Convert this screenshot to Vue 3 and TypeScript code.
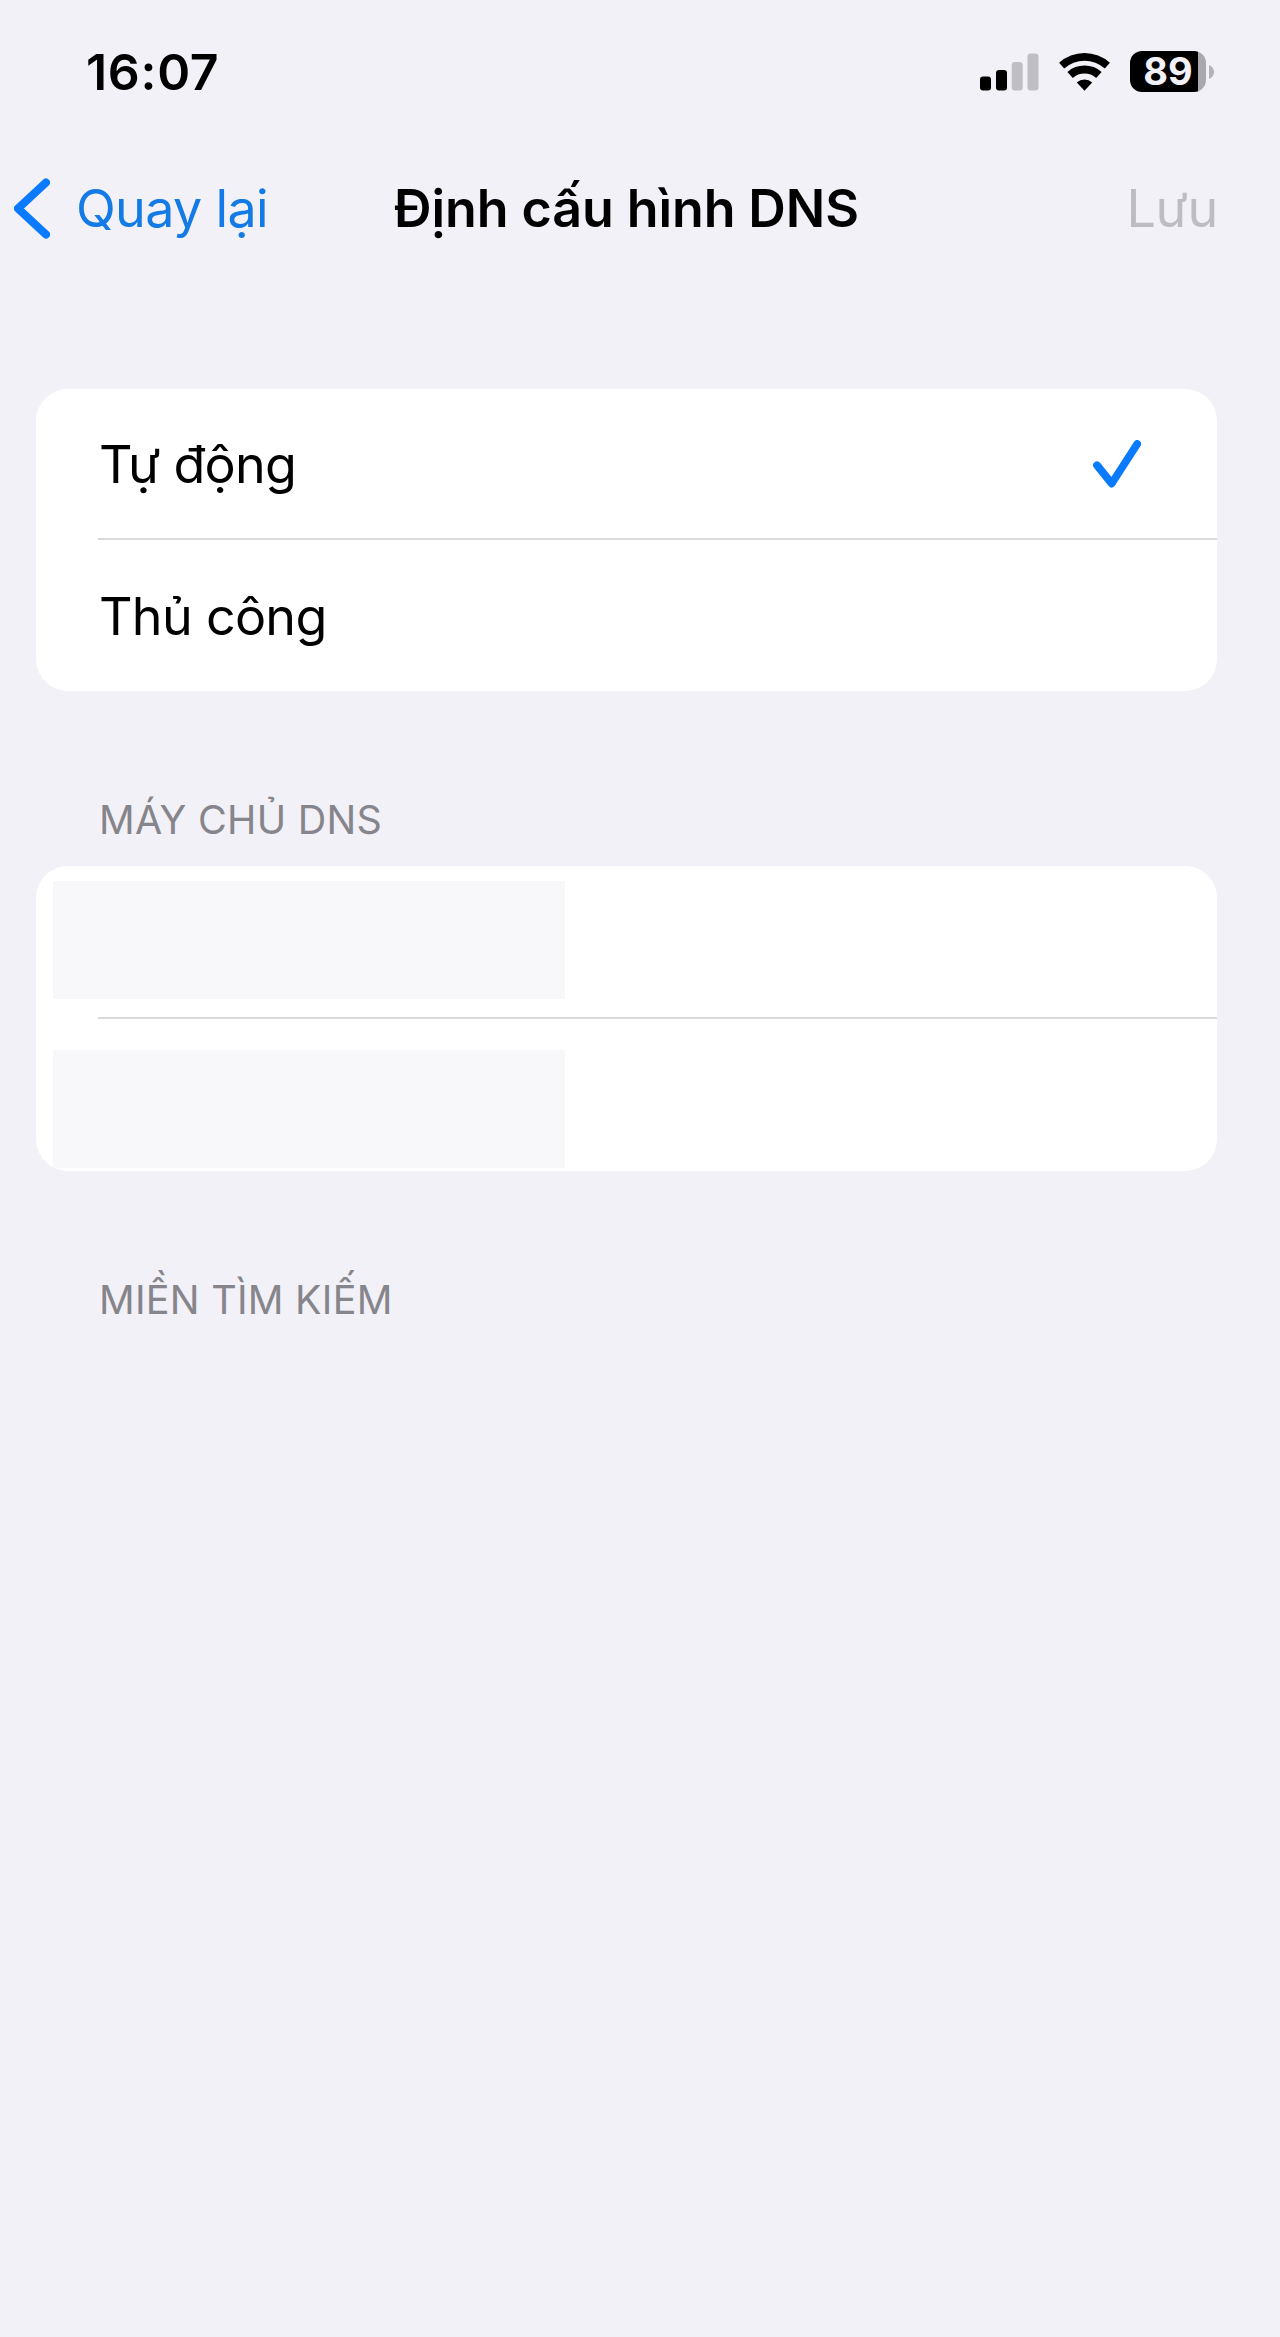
<template>
  <div class="screen">
    <header class="status-bar">
      <span class="time">16:07</span>
      <div class="status-icons">
        <svg class="signal" width="59" height="38" viewBox="0 0 59 38">
          <rect x="0" y="23.5" width="11" height="14" rx="3" fill="#000" />
          <rect x="16" y="17" width="11" height="20.5" rx="3" fill="#000" />
          <rect x="31.7" y="9" width="11" height="28.5" rx="3" fill="#bfbec4" />
          <rect x="47.5" y="0.5" width="11" height="37" rx="3" fill="#bfbec4" />
        </svg>
        <svg class="wifi" width="51" height="38" viewBox="0 0 51 38">
          <path d="M.1 9.8A38 38 0 0 1 50.9 9.8L45.8 15.5A30.3 30.3 0 0 0 5.2 15.5Z" />
          <path d="M8.4 19A25.5 25.5 0 0 1 42.6 19L37.2 25A17.5 17.5 0 0 0 13.8 25Z" />
          <path d="M17.8 29.5A11.5 11.5 0 0 1 33.2 29.5L25.5 37.7Z" />
        </svg>
        <div class="battery">
          <div class="battery-body">
            <span class="battery-level">{{ battery }}</span>
          </div>
          <svg class="battery-cap" width="5" height="14" viewBox="0 0 5 14">
            <path d="M0 0C2.5 1 5 3.5 5 7S2.5 13 0 14Z" fill="#b4b3b9" />
          </svg>
        </div>
      </div>
    </header>

    <nav class="nav-bar">
      <button class="back-button">
        <svg width="36" height="62" viewBox="0 0 36 62">
          <path d="M32 4.5L4 30.5L32 56.5" />
        </svg>
        <span>Quay lại</span>
      </button>
      <h1 class="nav-title">Định cấu hình DNS</h1>
      <button class="save-button" disabled>Lưu</button>
    </nav>

    <main class="content">
      <div class="card">
        <template v-for="(mode, index) in modes" :key="mode.id">
          <div v-if="index > 0" class="divider"></div>
          <div class="row" @click="selected = mode.id">
            <span>{{ mode.label }}</span>
            <svg v-if="selected === mode.id" class="check" width="48" height="48" viewBox="0 0 48 48">
              <path d="M4 25.3L18.7 43.5L44.2 4" />
            </svg>
          </div>
        </template>
      </div>

      <h2 class="section-title">MÁY CHỦ DNS</h2>
      <div class="card">
        <div class="server-row">
          <div class="server-mask"></div>
        </div>
        <div class="divider"></div>
        <div class="server-row lower">
          <div class="server-mask"></div>
        </div>
      </div>

      <h2 class="section-title">MIỀN TÌM KIẾM</h2>
    </main>
  </div>
</template>

<script setup lang="ts">
import { ref } from 'vue'

interface DnsMode {
  id: string
  label: string
}

const battery = ref<number>(89)
const selected = ref<string>('auto')

const modes: DnsMode[] = [
  { id: 'auto', label: 'Tự động' },
  { id: 'manual', label: 'Thủ công' },
]
</script>

<style>
body {
  background-color: #f2f1f7;
}
</style>

<style scoped>
.screen {
  box-sizing: border-box;
  min-height: 2337px;
  padding-right: 27px;
  background-color: #f2f1f7;
  font-family: Inter, 'Liberation Sans', sans-serif;
  color: #000;
}

.status-bar {
  display: flex;
  align-items: center;
  justify-content: space-between;
  height: 143px;
  padding: 0 39px 0 86px;
}

.time {
  font-size: 50px;
  font-weight: 600;
  letter-spacing: 0.7px;
}

.status-icons {
  display: flex;
  align-items: center;
}

.wifi {
  margin: 0 20px;
}

.battery {
  display: flex;
  align-items: center;
  gap: 3px;
}

.battery-body {
  display: flex;
  align-items: center;
  justify-content: center;
  width: 76px;
  height: 41px;
  border-radius: 12px;
  background: linear-gradient(to right, #000 68px, #a9a8ad 68px);
}

.battery-level {
  font-size: 38px;
  font-weight: 700;
  line-height: 41px;
  color: #f2f1f7;
}

.nav-bar {
  display: grid;
  grid-template-columns: 1fr auto 1fr;
  align-items: center;
  height: 131px;
}

.back-button,
.save-button {
  border: none;
  padding: 0;
  background: none;
  font-family: inherit;
  font-size: 52px;
}

.back-button {
  display: flex;
  align-items: center;
  gap: 26px;
  padding-left: 14px;
  color: #147be6;
  letter-spacing: -0.65px;
  cursor: pointer;
}

.back-button path {
  fill: none;
  stroke: #0a7aff;
  stroke-width: 8;
  stroke-linecap: round;
  stroke-linejoin: round;
}

.nav-title {
  margin: 0;
  font-size: 52px;
  font-weight: 600;
  letter-spacing: -0.1px;
}

.save-button {
  justify-self: end;
  padding-right: 35px;
  color: #bdbcc2;
  letter-spacing: -0.3px;
}

.content {
  padding: 115px 9px 0 36px;
}

.card {
  width: 1181px;
  border-radius: 32px;
  background-color: #fff;
  overflow: hidden;
}

.row {
  box-sizing: border-box;
  display: flex;
  align-items: center;
  justify-content: space-between;
  height: 149px;
  padding: 1px 76px 0 63px;
  font-size: 52px;
  letter-spacing: -0.7px;
}

.divider + .row {
  height: 151px;
}

.check path {
  fill: none;
  stroke: #0a7aff;
  stroke-width: 7.8;
  stroke-linecap: round;
  stroke-linejoin: round;
}

.divider {
  height: 2px;
  margin-left: 62px;
  background-color: #dadadc;
}

.section-title {
  margin: 105px 0 22px 63px;
  font-size: 39.5px;
  font-weight: 400;
  line-height: 48px;
  letter-spacing: 0.25px;
  color: #86858b;
}

.server-row {
  height: 136px;
  padding: 15px 0 0 17px;
}

.server-row.lower {
  height: 121px;
  padding-top: 31px;
}

.server-mask {
  width: 512px;
  height: 118px;
  background-color: #f8f8fb;
}
</style>
